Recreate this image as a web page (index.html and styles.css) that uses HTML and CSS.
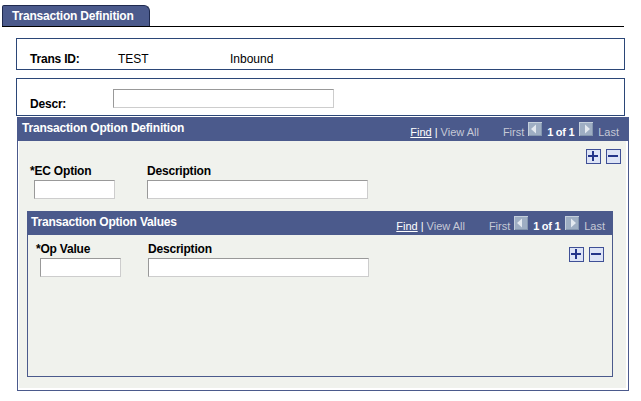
FILE: index.html
```html
<!DOCTYPE html>
<html>
<head>
<meta charset="utf-8">
<title>Transaction Definition</title>
<link rel="stylesheet" href="styles.css">
</head>
<body>
<div class="page">
  <div class="tabbar"><div class="tab">Transaction Definition</div></div>

  <div class="box box-id">
    <span class="lbl w-id">Trans ID:</span><span class="val w-test">TEST</span><span class="val">Inbound</span>
  </div>

  <div class="box box-descr">
    <label class="lbl w-descr">Descr:</label><input class="inp inp-long" type="text">
  </div>

  <div class="grid grid-outer">
    <div class="grid-head">
      <span class="grid-title title-outer">Transaction Option Definition</span>
      <span class="nav nav-outer"><span class="find">Find</span><span class="sep">|</span><span class="dim">View All</span><span class="dim first">First</span><svg class="arw arw-l" width="14" height="14" viewBox="0 0 14 14"><rect width="14" height="14" fill="#9eaec3"/><path d="M0 0h14v1H1v13H0z" fill="#c4cfdc"/><path d="M1 13h13v1H1zM13 1h1v13h-1z" fill="#8496ae"/><path d="M3 7l5-4.5v9z" fill="#e3e9f0"/></svg><span class="count">1 of 1</span><svg class="arw arw-r" width="14" height="14" viewBox="0 0 14 14"><rect width="14" height="14" fill="#9eaec3"/><path d="M0 0h14v1H1v13H0z" fill="#c4cfdc"/><path d="M1 13h13v1H1zM13 1h1v13h-1z" fill="#8496ae"/><path d="M11 7l-5-4.5v9z" fill="#e3e9f0"/></svg><span class="dim last">Last</span></span>
    </div>
    <div class="frame-outer">
      <div class="body-outer">
        <div class="row row-outer">
          <div class="fields fields-outer">
            <span class="lbl">*EC Option</span><span class="lbl">Description</span>
            <input class="inp inp-short" type="text"><input class="inp inp-long" type="text">
          </div>
          <div class="btns">
            <svg width="15" height="15" viewBox="0 0 15 15"><rect x=".5" y=".5" width="14" height="14" fill="#dde4f6" stroke="#3f5096"/><path d="M2 6h10v2H2zM6 2h2v10H6z" fill="#24358a"/></svg>
            <svg width="15" height="15" viewBox="0 0 15 15"><rect x=".5" y=".5" width="14" height="14" fill="#dde4f6" stroke="#3f5096"/><path d="M2 6h10v2H2z" fill="#24358a"/></svg>
          </div>
        </div>

        <div class="grid grid-inner">
          <div class="grid-head">
            <span class="grid-title title-inner">Transaction Option Values</span>
            <span class="nav nav-inner"><span class="find">Find</span><span class="sep">|</span><span class="dim">View All</span><span class="dim first">First</span><svg class="arw arw-l" width="14" height="14" viewBox="0 0 14 14"><rect width="14" height="14" fill="#9eaec3"/><path d="M0 0h14v1H1v13H0z" fill="#c4cfdc"/><path d="M1 13h13v1H1zM13 1h1v13h-1z" fill="#8496ae"/><path d="M3 7l5-4.5v9z" fill="#e3e9f0"/></svg><span class="count">1 of 1</span><svg class="arw arw-r" width="14" height="14" viewBox="0 0 14 14"><rect width="14" height="14" fill="#9eaec3"/><path d="M0 0h14v1H1v13H0z" fill="#c4cfdc"/><path d="M1 13h13v1H1zM13 1h1v13h-1z" fill="#8496ae"/><path d="M11 7l-5-4.5v9z" fill="#e3e9f0"/></svg><span class="dim last">Last</span></span>
          </div>
          <div class="frame-inner">
            <div class="row row-inner">
              <div class="fields fields-inner">
                <span class="lbl">*Op Value</span><span class="lbl">Description</span>
                <input class="inp inp-short" type="text"><input class="inp inp-long" type="text">
              </div>
              <div class="btns btns-inner">
                <svg width="15" height="15" viewBox="0 0 15 15"><rect x=".5" y=".5" width="14" height="14" fill="#dde4f6" stroke="#3f5096"/><path d="M2 6h10v2H2zM6 2h2v10H6z" fill="#24358a"/></svg>
                <svg width="15" height="15" viewBox="0 0 15 15"><rect x=".5" y=".5" width="14" height="14" fill="#dde4f6" stroke="#3f5096"/><path d="M2 6h10v2H2z" fill="#24358a"/></svg>
              </div>
            </div>
          </div>
        </div>
      </div>
    </div>
  </div>
</div>
</body>
</html>
```

FILE: styles.css
```css
* { box-sizing: border-box; }

body {
  margin: 0;
  background: #fff;
  color: #000;
  font-family: "Liberation Sans", Arial, sans-serif;
  font-size: 12px;
}

.page { padding-top: 5px; }

/* Tab strip */
.tabbar {
  display: flex;
  width: 622px;
  margin-left: 2px;
  border-bottom: 1px solid #000;
}
.tab {
  width: 148px;
  height: 21px;
  padding: 3px 0 0 9px;
  background: #4b5a8c;
  border: 1px solid #1f2a4f;
  border-bottom: 0;
  border-radius: 2px 6px 0 0;
  color: #fff;
  font-weight: bold;
  letter-spacing: -0.2px;
  line-height: 14px;
  white-space: nowrap;
}

/* Header boxes */
.box {
  display: flex;
  width: 609px;
  margin-left: 16px;
  border: 1px solid #2b4677;
}
.box-id {
  height: 32px;
  margin-top: 11px;
  padding: 13px 0 0 13px;
  line-height: 14px;
}
.box-descr {
  height: 38px;
  margin-top: 8px;
  padding: 10px 0 0 13px;
  align-items: flex-start;
}
.box-descr .lbl { margin-top: 8px; }

.lbl {
  font-weight: bold;
  letter-spacing: -0.2px;
  line-height: 14px;
  white-space: nowrap;
}
.val { line-height: 14px; }
.w-id { width: 88px; }
.w-test { width: 112px; }
.w-descr { width: 83px; }

.inp {
  display: block;
  height: 19px;
  margin: 0;
  padding: 0 2px;
  background: #fff;
  border: 1px solid;
  border-color: #999 #cdcdcd #cdcdcd #999;
  font-family: "Liberation Sans", Arial, sans-serif;
  font-size: 12px;
}
.inp-short { width: 81px; margin-left: 4px; }
.inp-long { width: 221px; }

/* Grids */
.grid-outer { width: 612px; margin: 1px 0 0 17px; }
.grid-inner { width: 586px; margin-top: 12px; }

.grid-head {
  display: flex;
  justify-content: space-between;
  align-items: flex-start;
  height: 24px;
  background: #4b5a8c;
  color: #fff;
}
.grid-title {
  padding-top: 4px;
  font-weight: bold;
  letter-spacing: -0.2px;
  line-height: 14px;
  white-space: nowrap;
}
.title-outer { padding-left: 5px; }
.title-inner { padding-left: 4px; }

.nav {
  display: flex;
  align-items: baseline;
  padding-top: 5px;
  font-size: 11px;
  line-height: 13px;
  white-space: nowrap;
}
.nav-outer { padding-right: 10px; }
.nav-inner { padding-right: 8px; }
.find { color: #fff; text-decoration: underline; }
.sep { margin: 0 3px; color: #fff; }
.dim { color: #c6c9d6; }
.first { margin-left: 24px; }
.arw { display: block; flex: none; }
.arw-l { margin-left: 4px; }
.arw-r { margin-left: 5px; }
.count { margin-left: 5px; font-weight: bold; letter-spacing: -0.3px; color: #fff; }
.last { margin-left: 5px; }

.frame-outer {
  padding: 0 2px 2px 1px;
  background: #fff;
  border: 1px solid #4b5a8c;
  border-top: 0;
}
.body-outer {
  height: 247px;
  padding: 8px 5px 0 8px;
  background: #f0f2ed;
}
.frame-inner {
  height: 142px;
  padding: 7px 8px 0 8px;
  background: #f0f2ed;
  border: 1px solid #4b5a8c;
  border-top: 0;
}

.row {
  display: flex;
  justify-content: space-between;
  align-items: flex-start;
}
.row-outer { padding-left: 3px; }

.fields {
  display: grid;
  row-gap: 2px;
}
.fields-outer { grid-template-columns: 117px 221px; margin-top: 15px; }
.fields-inner { grid-template-columns: 112px 221px; }

.btns { display: flex; gap: 5px; }
.btns svg { display: block; }
.btns-inner { margin-top: 5px; }
```
